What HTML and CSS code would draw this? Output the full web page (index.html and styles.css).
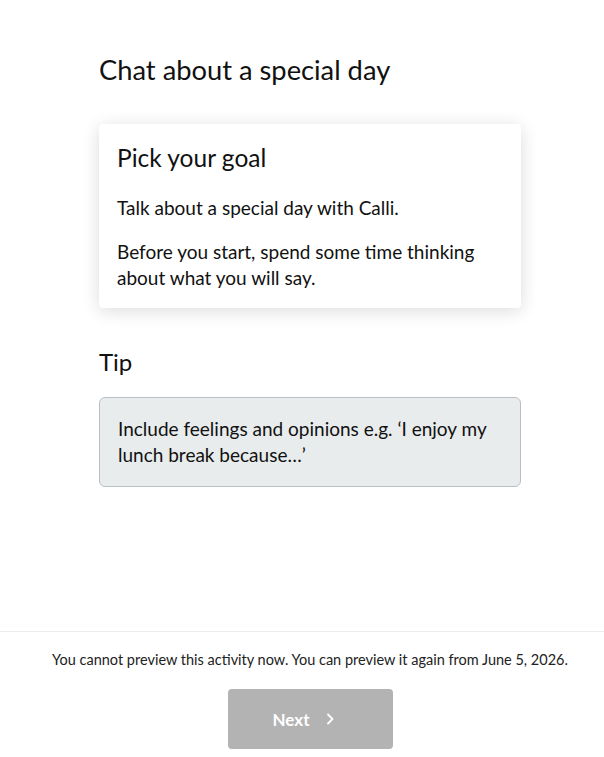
FILE: index.html
```html
<!DOCTYPE html>
<html lang="en">
<head>
<meta charset="utf-8">
<link rel="stylesheet" href="styles.css">
</head>
<body>
<div class="page">
  <main class="content">
    <h1 class="title">Chat about a special day</h1>
    <section class="card">
      <h2 class="card-title">Pick your goal</h2>
      <p class="text">Talk about a special day with Calli.</p>
      <p class="text">Before you start, spend some time thinking about what you will say.</p>
    </section>
    <h2 class="tip-title">Tip</h2>
    <div class="tip">
      <p class="text">Include feelings and opinions e.g. ‘I enjoy my lunch break because…’</p>
    </div>
  </main>
  <footer class="footer">
    <p class="notice">You cannot preview this activity now. You can preview it again from June 5, 2026.</p>
    <button class="next" type="button">Next
      <svg width="14" height="14" viewBox="0 0 14 14" aria-hidden="true"><path d="M5 2.5 L9.5 7 L5 11.5" fill="none" stroke="#fff" stroke-width="1.8" stroke-linecap="round" stroke-linejoin="round"/></svg>
    </button>
  </footer>
</div>
</body>
</html>
```
FILE: styles.css
```css
html, body {
  margin: 0;
  padding: 0;
  background: #fff;
}
body {
  font-family: "Lato", "Noto Sans", sans-serif;
  color: #111;
}
.page {
  height: 757px;
  display: flex;
  flex-direction: column;
}
.content {
  flex: 1;
  padding: 50px 0 0 99px;
  width: 422px;
}
.title {
  margin: 0;
  font-weight: 400;
  font-size: 27.3px;
  line-height: 40px;
}
.card {
  margin-top: 34px;
  background: #fff;
  border-radius: 4px;
  box-shadow: 0 3px 18px rgba(0,0,0,0.14);
  padding: 18px 18px 17px 18px;
}
.card-title {
  margin: 0 0 21px;
  font-weight: 400;
  font-size: 24.5px;
  line-height: 32px;
}
.text {
  margin: 0 0 18px;
  font-size: 19px;
  line-height: 26px;
}
.card .text:last-child,
.tip .text:last-child {
  margin-bottom: 0;
}
.tip-title {
  margin: 38px 0 0;
  font-weight: 400;
  font-size: 24px;
  line-height: 32px;
}
.tip {
  margin-top: 19px;
  background: #e8eced;
  border: 1px solid #b9bfc3;
  border-radius: 6px;
  padding: 18px;
}
.footer {
  border-top: 1px solid #ececec;
  display: flex;
  flex-direction: column;
  align-items: center;
  padding: 19px 0 8px 16px;
}
.notice {
  margin: 0 0 20px;
  font-size: 14.5px;
  line-height: 18px;
  color: #222;
}
.next {
  width: 165px;
  height: 60px;
  border: none;
  border-radius: 4px;
  background: #b3b3b3;
  color: #fff;
  font-family: inherit;
  font-weight: 700;
  font-size: 17px;
  display: flex;
  align-items: center;
  justify-content: center;
  gap: 14px;
  padding: 0 10px 0 0;
}
```
